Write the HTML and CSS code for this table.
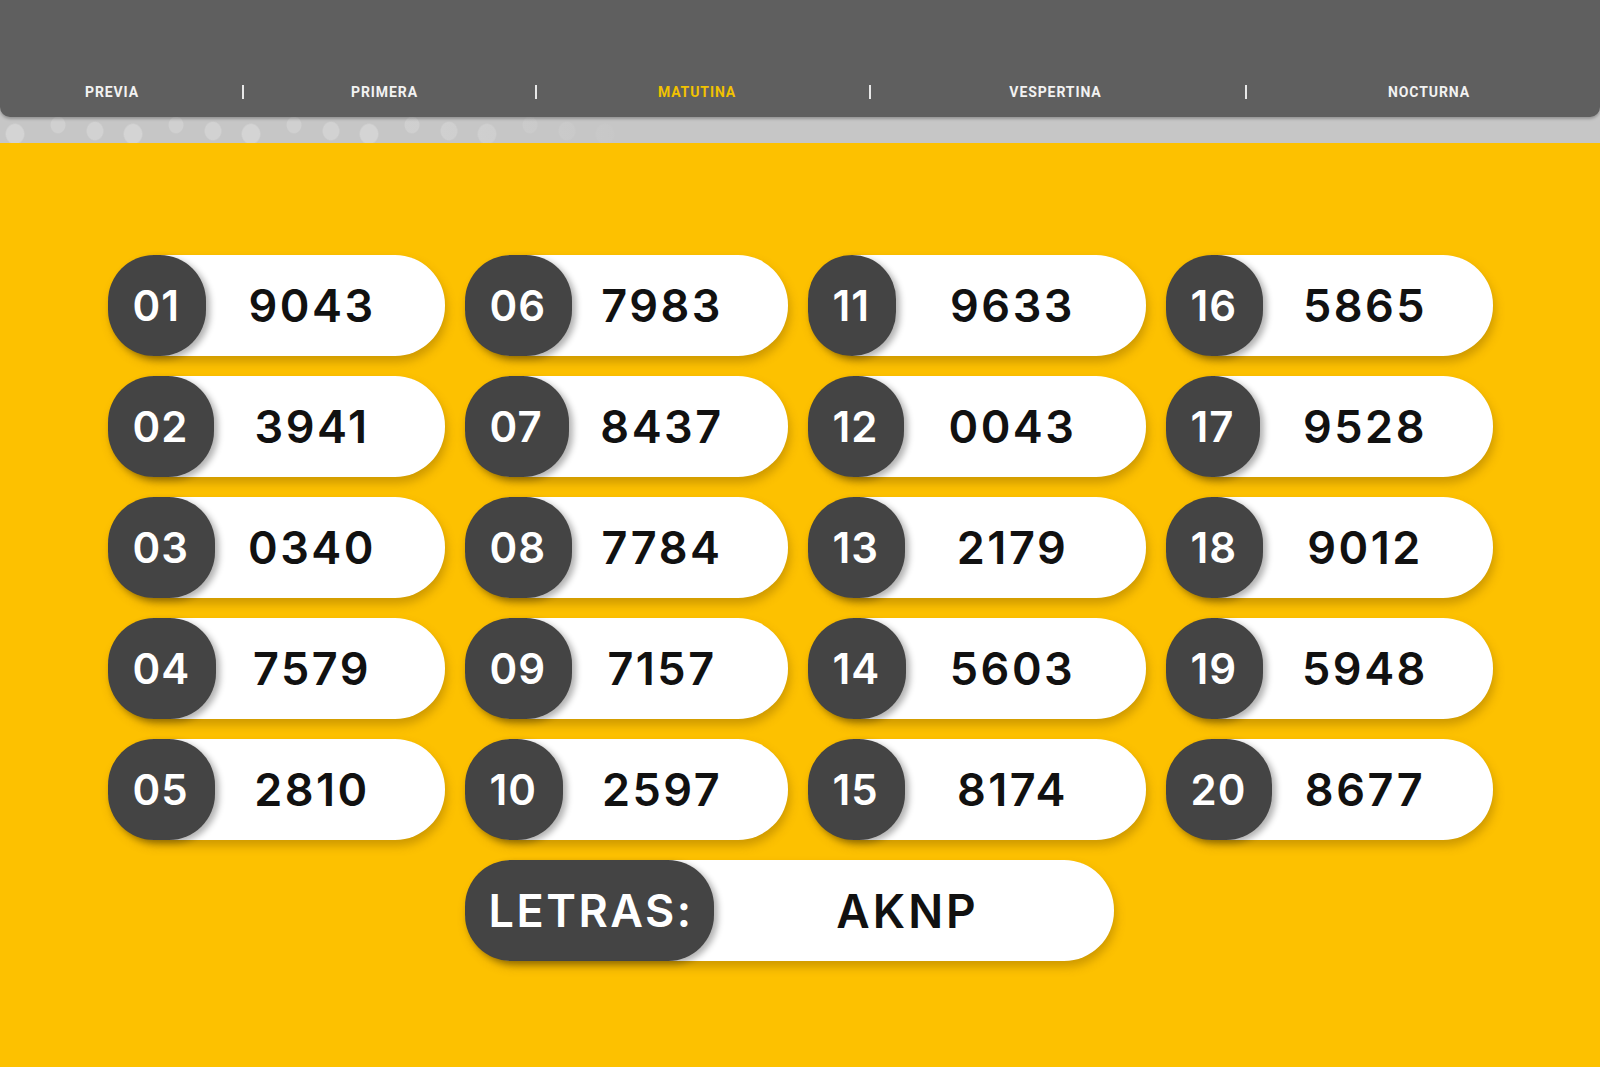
FILE: index.html
```html
<!DOCTYPE html>
<html lang="es">
<head>
<meta charset="utf-8">
<title>Quiniela - Matutina</title>
<link rel="stylesheet" href="styles.css">
</head>
<body>
<div class="top">
  <header class="header">
    <nav class="nav">
      <a class="nav-item">PREVIA</a>
      <span class="sep"></span>
      <a class="nav-item">PRIMERA</a>
      <span class="sep"></span>
      <a class="nav-item active">MATUTINA</a>
      <span class="sep"></span>
      <a class="nav-item">VESPERTINA</a>
      <span class="sep"></span>
      <a class="nav-item">NOCTURNA</a>
    </nav>
  </header>
  <div class="band"></div>
</div>
<main class="board">
  <div class="grid">
    <div class="pill"><span class="badge">01</span><span class="num">9043</span></div>
    <div class="pill"><span class="badge">06</span><span class="num">7983</span></div>
    <div class="pill"><span class="badge">11</span><span class="num">9633</span></div>
    <div class="pill"><span class="badge">16</span><span class="num">5865</span></div>

    <div class="pill"><span class="badge">02</span><span class="num">3941</span></div>
    <div class="pill"><span class="badge">07</span><span class="num">8437</span></div>
    <div class="pill"><span class="badge">12</span><span class="num">0043</span></div>
    <div class="pill"><span class="badge">17</span><span class="num">9528</span></div>

    <div class="pill"><span class="badge">03</span><span class="num">0340</span></div>
    <div class="pill"><span class="badge">08</span><span class="num">7784</span></div>
    <div class="pill"><span class="badge">13</span><span class="num">2179</span></div>
    <div class="pill"><span class="badge">18</span><span class="num">9012</span></div>

    <div class="pill"><span class="badge">04</span><span class="num">7579</span></div>
    <div class="pill"><span class="badge">09</span><span class="num">7157</span></div>
    <div class="pill"><span class="badge">14</span><span class="num">5603</span></div>
    <div class="pill"><span class="badge">19</span><span class="num">5948</span></div>

    <div class="pill"><span class="badge">05</span><span class="num">2810</span></div>
    <div class="pill"><span class="badge">10</span><span class="num">2597</span></div>
    <div class="pill"><span class="badge">15</span><span class="num">8174</span></div>
    <div class="pill"><span class="badge">20</span><span class="num">8677</span></div>

    <div class="letters"><span class="letters-label">LETRAS:</span><span class="letters-value">AKNP</span></div>
  </div>
</main>
</body>
</html>
```

FILE: styles.css
```css
html, body {
  margin: 0;
  padding: 0;
}

body {
  background: #fdc100;
  min-height: 1067px;
  font-family: "Inter", "Roboto", "Liberation Sans", sans-serif;
  overflow: hidden;
}

.top {
  background: #c6c6c6;
}

.header {
  height: 117px;
  background: #5f5f5f;
  border-radius: 0 0 10px 10px;
  box-shadow: 0 2px 3px rgba(0, 0, 0, 0.25);
  position: relative;
  z-index: 1;
}

.nav {
  display: grid;
  grid-template-columns: 126px 136px 147px 156px 166px 179px 193px 187px 180px;
  align-items: center;
  margin-left: 49px;
  padding-top: 83px;
  height: 18px;
}

.nav-item {
  justify-self: center;
  font-family: "Roboto", "Liberation Sans", sans-serif;
  font-weight: 700;
  font-size: 14px;
  letter-spacing: 0.9px;
  color: #f2f2f2;
  line-height: 18px;
}

.nav-item.active {
  color: #f2c200;
}

.sep {
  justify-self: center;
  width: 2px;
  height: 14px;
  background: #e8e8e8;
}

.band {
  height: 26px;
  background-image:
    linear-gradient(to right, rgba(198,198,198,0) 0, rgba(198,198,198,0) 25%, #c6c6c6 40%),
    radial-gradient(ellipse 10px 11px at 15px 17px, #d4d4d4 85%, transparent 100%),
    radial-gradient(ellipse 8px 9px at 58px 8px, #d0d0d0 85%, transparent 100%),
    radial-gradient(ellipse 9px 10px at 95px 14px, #d2d2d2 85%, transparent 100%);
  background-size: 100% 100%, 118px 26px, 118px 26px, 118px 26px;
  background-repeat: no-repeat, repeat-x, repeat-x, repeat-x;
}

.board {
  padding-top: 112px;
}

.grid {
  display: grid;
  grid-template-columns: 337px 323px 338px 327px;
  grid-auto-rows: 101px;
  column-gap: 20px;
  row-gap: 20px;
  width: 1385px;
  margin: 0 auto;
}

.pill {
  display: grid;
  background: #ffffff;
  border-radius: 50px;
  box-shadow: 2px 6px 10px rgba(120, 80, 0, 0.35);
}

.pill > * {
  grid-area: 1 / 1;
}

.badge {
  justify-self: start;
  display: flex;
  align-items: center;
  padding: 0 26px 0 25px;
  background: #444444;
  color: #ffffff;
  border-radius: 46px;
  font-weight: 560;
  font-size: 42px;
  letter-spacing: 1px;
  box-shadow: 4px 3px 6px rgba(0, 0, 0, 0.3);
}

.num {
  align-self: center;
  padding-left: 72px;
  text-align: center;
  font-weight: 560;
  font-size: 45px;
  letter-spacing: 2.5px;
  color: #111111;
}

.letters {
  grid-column: 2 / span 2;
  width: 649px;
  display: flex;
  background: #ffffff;
  border-radius: 50px;
  box-shadow: 2px 6px 10px rgba(120, 80, 0, 0.35);
}

.letters-label {
  display: flex;
  align-items: center;
  padding: 0 20px 0 24px;
  background: #444444;
  color: #ffffff;
  border-radius: 46px;
  font-weight: 560;
  font-size: 45px;
  letter-spacing: 2.5px;
  box-shadow: 4px 3px 6px rgba(0, 0, 0, 0.3);
}

.letters-value {
  flex: 1;
  display: flex;
  align-items: center;
  justify-content: center;
  padding-right: 12px;
  font-weight: 560;
  font-size: 46px;
  letter-spacing: 3px;
  color: #111111;
}
```
